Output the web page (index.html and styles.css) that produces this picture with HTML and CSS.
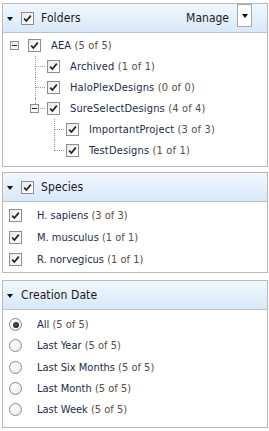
FILE: index.html
```html
<!DOCTYPE html>
<html>
<head>
<meta charset="utf-8">
<link rel="stylesheet" href="styles.css">
</head>
<body>
<div class="panel folders">
  <div class="hdr">
    <span class="arrow"></span>
    <span class="cb"><svg width="13" height="13" viewBox="0 0 13 13"><rect x="0.5" y="0.5" width="12" height="12" fill="url(#g)" stroke="#8d8d8d"/><path d="M3.2 6.6 L5.4 9 L9.8 3.6" fill="none" stroke="#222" stroke-width="1.7"/></svg></span>
    <span class="title">Folders</span>
    <span class="manage">Manage</span>
    <span class="ddbtn"><span class="arrow small"></span></span>
  </div>
  <div class="body tree">
    <div class="row l0">
      <span class="conn"><span class="exp"></span></span>
      <span class="cb"><svg width="13" height="13" viewBox="0 0 13 13"><rect x="0.5" y="0.5" width="12" height="12" fill="url(#g)" stroke="#8d8d8d"/><path d="M3.2 6.6 L5.4 9 L9.8 3.6" fill="none" stroke="#222" stroke-width="1.7"/></svg></span>
      <span class="lbl">AEA <span class="cnt">(5 of 5)</span></span>
    </div>
    <div class="kids">
      <div class="row">
        <span class="conn mid"></span>
        <span class="cb"><svg width="13" height="13" viewBox="0 0 13 13"><rect x="0.5" y="0.5" width="12" height="12" fill="url(#g)" stroke="#8d8d8d"/><path d="M3.2 6.6 L5.4 9 L9.8 3.6" fill="none" stroke="#222" stroke-width="1.7"/></svg></span>
        <span class="lbl">Archived <span class="cnt">(1 of 1)</span></span>
      </div>
      <div class="row">
        <span class="conn mid"></span>
        <span class="cb"><svg width="13" height="13" viewBox="0 0 13 13"><rect x="0.5" y="0.5" width="12" height="12" fill="url(#g)" stroke="#8d8d8d"/><path d="M3.2 6.6 L5.4 9 L9.8 3.6" fill="none" stroke="#222" stroke-width="1.7"/></svg></span>
        <span class="lbl">HaloPlexDesigns <span class="cnt">(0 of 0)</span></span>
      </div>
      <div class="row">
        <span class="conn last haskids"><span class="exp"></span></span>
        <span class="cb"><svg width="13" height="13" viewBox="0 0 13 13"><rect x="0.5" y="0.5" width="12" height="12" fill="url(#g)" stroke="#8d8d8d"/><path d="M3.2 6.6 L5.4 9 L9.8 3.6" fill="none" stroke="#222" stroke-width="1.7"/></svg></span>
        <span class="lbl">SureSelectDesigns <span class="cnt">(4 of 4)</span></span>
      </div>
      <div class="kids">
        <div class="row">
          <span class="conn mid"></span>
          <span class="cb"><svg width="13" height="13" viewBox="0 0 13 13"><rect x="0.5" y="0.5" width="12" height="12" fill="url(#g)" stroke="#8d8d8d"/><path d="M3.2 6.6 L5.4 9 L9.8 3.6" fill="none" stroke="#222" stroke-width="1.7"/></svg></span>
          <span class="lbl">ImportantProject <span class="cnt">(3 of 3)</span></span>
        </div>
        <div class="row">
          <span class="conn last"></span>
          <span class="cb"><svg width="13" height="13" viewBox="0 0 13 13"><rect x="0.5" y="0.5" width="12" height="12" fill="url(#g)" stroke="#8d8d8d"/><path d="M3.2 6.6 L5.4 9 L9.8 3.6" fill="none" stroke="#222" stroke-width="1.7"/></svg></span>
          <span class="lbl">TestDesigns <span class="cnt">(1 of 1)</span></span>
        </div>
      </div>
    </div>
  </div>
</div>

<div class="panel species">
  <div class="hdr">
    <span class="arrow"></span>
    <span class="cb"><svg width="13" height="13" viewBox="0 0 13 13"><rect x="0.5" y="0.5" width="12" height="12" fill="url(#g)" stroke="#8d8d8d"/><path d="M3.2 6.6 L5.4 9 L9.8 3.6" fill="none" stroke="#222" stroke-width="1.7"/></svg></span>
    <span class="title">Species</span>
  </div>
  <div class="body list">
    <div class="row">
      <span class="cb"><svg width="13" height="13" viewBox="0 0 13 13"><rect x="0.5" y="0.5" width="12" height="12" fill="url(#g)" stroke="#8d8d8d"/><path d="M3.2 6.6 L5.4 9 L9.8 3.6" fill="none" stroke="#222" stroke-width="1.7"/></svg></span>
      <span class="lbl">H. sapiens <span class="cnt">(3 of 3)</span></span>
    </div>
    <div class="row">
      <span class="cb"><svg width="13" height="13" viewBox="0 0 13 13"><rect x="0.5" y="0.5" width="12" height="12" fill="url(#g)" stroke="#8d8d8d"/><path d="M3.2 6.6 L5.4 9 L9.8 3.6" fill="none" stroke="#222" stroke-width="1.7"/></svg></span>
      <span class="lbl">M. musculus <span class="cnt">(1 of 1)</span></span>
    </div>
    <div class="row">
      <span class="cb"><svg width="13" height="13" viewBox="0 0 13 13"><rect x="0.5" y="0.5" width="12" height="12" fill="url(#g)" stroke="#8d8d8d"/><path d="M3.2 6.6 L5.4 9 L9.8 3.6" fill="none" stroke="#222" stroke-width="1.7"/></svg></span>
      <span class="lbl">R. norvegicus <span class="cnt">(1 of 1)</span></span>
    </div>
  </div>
</div>

<div class="panel dates">
  <div class="hdr">
    <span class="arrow"></span>
    <span class="title">Creation Date</span>
  </div>
  <div class="body list radios">
    <div class="row"><span class="radio on"></span><span class="lbl">All <span class="cnt">(5 of 5)</span></span></div>
    <div class="row"><span class="radio"></span><span class="lbl">Last Year <span class="cnt">(5 of 5)</span></span></div>
    <div class="row"><span class="radio"></span><span class="lbl">Last Six Months <span class="cnt">(5 of 5)</span></span></div>
    <div class="row"><span class="radio"></span><span class="lbl">Last Month <span class="cnt">(5 of 5)</span></span></div>
    <div class="row"><span class="radio"></span><span class="lbl">Last Week <span class="cnt">(5 of 5)</span></span></div>
  </div>
</div>

<svg class="defs" width="0" height="0">
  <defs>
    <linearGradient id="g" x1="0" y1="0" x2="1" y2="1">
      <stop offset="0" stop-color="#e9e9e9"/>
      <stop offset="1" stop-color="#ffffff"/>
    </linearGradient>
  </defs>
</svg>
</body>
</html>
```
FILE: styles.css
```css
* { box-sizing: border-box; }
html, body { margin: 0; padding: 0; background: #fff; }
body {
  padding: 3px 0 0 2px;
  font-family: "DejaVu Sans Condensed", "DejaVu Sans", sans-serif;
  font-size: 11px;
  color: #1b2a4c;
  width: 268px;
}
.defs { position: absolute; }
.panel {
  width: 266px;
  border: 1px solid #b9b9b9;
  margin-bottom: 5px;
}
.species { margin-bottom: 7px; }
.hdr {
  height: 29px;
  display: flex;
  align-items: center;
  background: linear-gradient(#f1f7fe, #d8e8f8);
  border-bottom: 1px solid #b9c3cd;
  padding-left: 4px;
  color: #1a1a1a;
  font-size: 12px;
}
.arrow {
  width: 0; height: 0;
  border-left: 3.5px solid transparent;
  border-right: 3.5px solid transparent;
  border-top: 4px solid #111;
  margin-right: 8px;
  margin-top: 1px;
}
.hdr .cb { margin-right: 7px; }
.title { flex: 1; letter-spacing: 0.1px; }
.manage { margin-right: 8px; }
.ddbtn {
  width: 15px;
  height: 23px;
  border: 1px solid #a8a8a8;
  background: #fdfdfd;
  display: flex;
  align-items: center;
  justify-content: center;
  margin-right: 15px;
  margin-top: -5px;
}
.ddbtn .arrow { margin: 0; }
.cb { width: 13px; height: 13px; display: inline-flex; flex: none; }
.cb svg { display: block; }
.body { padding-top: 2px; }
.tree { height: 133px; padding-left: 7px; }
.row {
  display: flex;
  align-items: center;
  height: 21px;
  white-space: nowrap;
}
.tree .lbl { letter-spacing: 0.15px; }
.lbl { margin-left: 10px; }
.cnt { color: #5e4a42; }
.conn {
  width: 16px;
  height: 21px;
  flex: none;
  margin-right: 2px;
  position: relative;
  display: flex;
  align-items: center;
  justify-content: flex-start;
}
.kids { padding-left: 19px; }
.conn.mid::before, .conn.last::before {
  content: "";
  position: absolute;
  left: 6px;
  top: 0;
  border-left: 1px dotted #9a9a9a;
}
.conn.mid::before { height: 21px; }
.conn.last::before { height: 11px; }
.conn.mid::after, .conn.last::after {
  content: "";
  position: absolute;
  left: 7px;
  top: 10px;
  width: 9px;
  border-top: 1px dotted #9a9a9a;
}
.conn.haskids::before { height: 6px; }
.conn.haskids::after { left: 11px; width: 5px; }
.exp {
  width: 9px;
  height: 9px;
  border: 1px solid #8e8e8e;
  background: linear-gradient(135deg, #e6e6e6, #fff);
  position: relative;
  z-index: 1;
  margin-left: 0;
}
.conn.haskids .exp { margin-left: 1px; }
.exp::after {
  content: "";
  position: absolute;
  left: 1px;
  top: 3px;
  width: 5px;
  height: 1px;
  background: #222;
}
.species .body { height: 70px; }
.list { padding-left: 6px; }
.list .row { height: 22px; }
.list .lbl { margin-left: 15px; }
.radios { height: 117px; padding-top: 4px; }
.radios .row { height: 21.3px; }
.radio {
  width: 13px;
  height: 13px;
  border-radius: 50%;
  border: 1px solid #8a8a8a;
  background: radial-gradient(circle at 35% 35%, #fff, #e8e8e8);
  flex: none;
  position: relative;
}
.radio.on::after {
  content: "";
  position: absolute;
  left: 2.5px; top: 2.5px;
  width: 6px; height: 6px;
  border-radius: 50%;
  background: radial-gradient(circle at 40% 40%, #555, #111);
}
```
